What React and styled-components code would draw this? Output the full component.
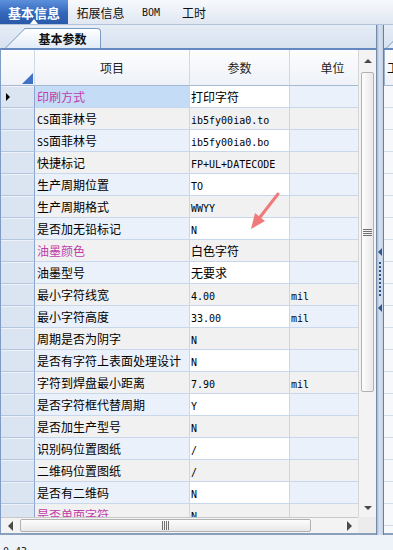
import React from 'react'
import styled, { createGlobalStyle } from 'styled-components'

const GlobalStyle = createGlobalStyle`
  html, body {
    margin: 0;
    padding: 0;
    overflow: hidden;
    background: #e9eff7;
  }
  body {
    font-family: "Noto Sans CJK SC", "Liberation Sans", sans-serif;
    font-size: 12px;
    color: #111;
  }
`

const rows = [
  { name: '印刷方式', value: '打印字符', pink: true },
  { name: 'CS面菲林号', value: 'ib5fy00ia0.to' },
  { name: 'SS面菲林号', value: 'ib5fy00ia0.bo' },
  { name: '快捷标记', value: 'FP+UL+DATECODE' },
  { name: '生产周期位置', value: 'TO' },
  { name: '生产周期格式', value: 'WWYY' },
  { name: '是否加无铅标记', value: 'N' },
  { name: '油墨颜色', value: '白色字符', pink: true },
  { name: '油墨型号', value: '无要求' },
  { name: '最小字符线宽', value: '4.00', unit: 'mil' },
  { name: '最小字符高度', value: '33.00', unit: 'mil' },
  { name: '周期是否为阴字', value: 'N' },
  { name: '是否有字符上表面处理设计', value: 'N' },
  { name: '字符到焊盘最小距离', value: '7.90', unit: 'mil' },
  { name: '是否字符框代替周期', value: 'Y' },
  { name: '是否加生产型号', value: 'N' },
  { name: '识别码位置图纸', value: '/' },
  { name: '二维码位置图纸', value: '/' },
  { name: '是否有二维码', value: 'N' },
  { name: '是否单面字符', value: 'N', pink: true },
]

const tabs = [
  { label: '基本信息', w: 68, active: true },
  { label: '拓展信息', w: 65 },
  { label: 'BOM', w: 36 },
  { label: '工时', w: 50 },
]

const tones = {
  sel: '#c5dcf6',
  blue: '#eaf1fb',
  gray: '#f1f1f1',
  white: '#ffffff',
}

// latin runs are drawn in a narrow mono face, like the old bitmap font
const Latin = styled.span`
  font-family: "DejaVu Sans Mono", "Liberation Mono", monospace;
  font-size: 10px;
`

const Txt = ({ children }) =>
  String(children)
    .split(/([\x00-\x7f]+)/)
    .filter(Boolean)
    .map((s, i) =>
      /^[\x00-\x7f]+$/.test(s) ? <Latin key={i}>{s}</Latin> : <span key={i}>{s}</span>
    )

const Screen = styled.div`
  position: relative;
  width: 393px;
  height: 550px;
  display: flex;
  flex-direction: column;
  background: #e9eff7;
  overflow: hidden;
`

const TopBar = styled.div`
  height: 25px;
  flex: none;
  display: flex;
  box-sizing: border-box;
  border-bottom: 1px solid #b3c3da;
  background: linear-gradient(#f7f9fc, #dfe7f2);
`

const MainTab = styled.div`
  position: relative;
  width: ${p => p.$w}px;
  display: flex;
  align-items: center;
  justify-content: center;
  font-size: ${p => (p.$active ? 13 : 12)}px;
  font-weight: ${p => (p.$active ? 700 : 400)};
  color: ${p => (p.$active ? '#fff' : '#111')};
  background: ${p => (p.$active ? 'linear-gradient(#5d90dc, #3367bb 55%, #2a59a8)' : 'transparent')};
  ${p => p.$active && `
    &::after {
      content: '';
      position: absolute;
      left: 50%;
      bottom: 0;
      margin-left: -4px;
      border-left: 4px solid transparent;
      border-right: 4px solid transparent;
      border-bottom: 5px solid #fff;
    }
  `}
`

const Body = styled.div`
  height: 510px;
  flex: none;
  display: flex;
`

const LeftPanel = styled.div`
  width: 376px;
  flex: none;
  display: flex;
  flex-direction: column;
`

const SubStrip = styled.div`
  position: relative;
  z-index: 0;
  height: 23px;
  flex: none;
  display: flex;
  align-items: flex-end;
  padding-left: ${p => p.$indent}px;
  box-sizing: border-box;
  background: linear-gradient(#e5edf7, #d8e2ef);
  overflow: hidden;
`

const SubTab = styled.div`
  position: relative;
  width: ${p => p.$w}px;
  height: 19px;
  border-top: 1px solid #7b9bc6;
  border-right: 1px solid #7b9bc6;
  border-radius: 0 4px 0 0;
  background: linear-gradient(#ffffff, #e2ebf8);
  font-size: 12px;
  font-weight: 700;
  line-height: 19px;
  text-align: center;
  &::before {
    content: '';
    position: absolute;
    top: -1px;
    bottom: 0;
    left: -20px;
    width: 22px;
    border-left: 1px solid #7b9bc6;
    border-top: 1px solid #7b9bc6;
    background: linear-gradient(#ffffff, #e2ebf8);
    transform: skewX(-45deg);
    transform-origin: bottom left;
    z-index: -1;
  }
`

const Frame = styled.div`
  flex: 1;
  min-height: 0;
  display: flex;
  flex-direction: column;
  border-top: 2px solid #6488bf;
  border-bottom: 2px solid #8a9fbd;
  border-left: 1px solid #7f9cc6;
`

const GridArea = styled.div`
  flex: 1;
  min-height: 0;
  display: flex;
`

const Viewport = styled.div`
  flex: 1;
  overflow: hidden;
  background: #fff;
`

const GridRow = styled.div`
  display: grid;
  grid-template-columns: 34px 155px 100px 86px;
  width: 375px;
`

const HeadCell = styled.div`
  position: relative;
  height: 36px;
  box-sizing: border-box;
  display: flex;
  align-items: center;
  justify-content: center;
  border-right: 1px solid #cfd8e6;
  border-bottom: 1px solid #a7b8d2;
  background: linear-gradient(#fdfdfe, #eef2f8);
  color: #222;
`

const CornerMark = styled.span`
  position: absolute;
  right: 1px;
  bottom: 1px;
  width: 0;
  height: 0;
  border-left: 11px solid transparent;
  border-bottom: 11px solid #3f72c6;
`

const RowHead = styled.div`
  height: 22px;
  box-sizing: border-box;
  display: flex;
  align-items: center;
  padding-left: 5px;
  background: #dbe4f1;
  border-bottom: 1px solid #b4c6df;
  border-right: 1px solid #8aa6cf;
  box-shadow: inset 0 1px 0 #f0f4fa;
`

const Marker = styled.span`
  width: 0;
  height: 0;
  border-top: 4px solid transparent;
  border-bottom: 4px solid transparent;
  border-left: 4px solid #000;
`

const Cell = styled.div`
  height: 22px;
  box-sizing: border-box;
  padding-left: ${p => p.$pad}px;
  line-height: 21px;
  white-space: nowrap;
  overflow: hidden;
  background: ${p => tones[p.$tone]};
  border-right: 1px solid #c9d7ec;
  border-bottom: 1px solid #c9d7ec;
  color: ${p => (p.$pink ? '#c13cab' : '#000')};
`

const VScroll = styled.div`
  width: 18px;
  flex: none;
  display: flex;
  flex-direction: column;
  box-sizing: border-box;
  background: #f3f3f3;
  border-left: 1px solid #d6d6d6;
`

const HScrollRow = styled.div`
  height: 16px;
  flex: none;
  display: flex;
`

const HScroll = styled.div`
  flex: 1;
  display: flex;
  align-items: stretch;
  box-sizing: border-box;
  background: #f3f3f3;
  border-top: 1px solid #c9c9c9;
`

const ScrollCorner = styled.div`
  width: 18px;
  background: #ececec;
`

const ScrollButton = styled.div`
  flex: none;
  ${p => (p.$vertical ? `height: ${p.$size}px;` : `width: ${p.$size}px;`)}
  display: flex;
  align-items: center;
  justify-content: center;
`

const Arrow = styled.span`
  width: 0;
  height: 0;
  ${p => p.$dir === 'up' && 'border-left: 4px solid transparent; border-right: 4px solid transparent; border-bottom: 4px solid #4a4a4a;'}
  ${p => p.$dir === 'down' && 'border-left: 4px solid transparent; border-right: 4px solid transparent; border-top: 4px solid #4a4a4a;'}
  ${p => p.$dir === 'left' && 'border-top: 5px solid transparent; border-bottom: 5px solid transparent; border-right: 5px solid #4a4a4a;'}
  ${p => p.$dir === 'right' && 'border-top: 5px solid transparent; border-bottom: 5px solid transparent; border-left: 5px solid #4a4a4a;'}
`

const Thumb = styled.div`
  flex: none;
  box-sizing: border-box;
  display: flex;
  align-items: center;
  justify-content: center;
  border: 1px solid #b1b1b1;
  border-radius: 2px;
  ${p =>
    p.$vertical
      ? `height: ${p.$size}px; margin: 0 2px; background: linear-gradient(90deg, #fdfdfd, #e8e8e8);`
      : `width: ${p.$size}px; margin: 1px 0; background: linear-gradient(#fdfdfd, #e8e8e8);`}
`

const Grip = styled.span`
  ${p =>
    p.$vertical
      ? 'width: 9px; height: 7px; background: repeating-linear-gradient(#707070 0 1px, transparent 1px 2px);'
      : 'width: 7px; height: 9px; background: repeating-linear-gradient(90deg, #707070 0 1px, transparent 1px 2px);'}
`

const Spacer = styled.div`
  flex: 1;
`

const Splitter = styled.div`
  width: 8px;
  flex: none;
  display: flex;
  flex-direction: column;
  align-items: center;
  justify-content: center;
  gap: 6px;
  box-sizing: border-box;
  border-left: 1px solid #7589a8;
  border-right: 1px solid #6c7f9c;
  background: linear-gradient(90deg, #a9bad3, #d9e4f2 45%, #c3d1e5);
`

const SplitArrow = styled.span`
  width: 0;
  height: 0;
  border-top: 4px solid transparent;
  border-bottom: 4px solid transparent;
  border-right: 4px solid #34558a;
`

const SplitDots = styled.span`
  width: 2px;
  height: 36px;
  background: repeating-linear-gradient(#2f4f80 0 2px, transparent 2px 4px);
`

const RightPanel = styled.div`
  flex: 1;
  min-width: 0;
  display: flex;
  flex-direction: column;
  overflow: hidden;
`

const MiniFrame = styled.div`
  flex: 1;
  display: flex;
  flex-direction: column;
  border-top: 2px solid #6488bf;
  border-bottom: 2px solid #8a9fbd;
`

const MiniHead = styled.div`
  height: 36px;
  flex: none;
  box-sizing: border-box;
  display: flex;
  align-items: center;
  padding-left: 2px;
  border-bottom: 1px solid #a7b8d2;
  border-left: 1px solid #9fb2ce;
  background: linear-gradient(#fdfdfe, #eef2f8);
  white-space: nowrap;
`

const MiniRows = styled.div`
  flex: 1;
  background: repeating-linear-gradient(#f6f8fb 0 21px, #d3dceb 21px 22px);
`

const StatusBar = styled.div`
  flex: 1;
  padding: 8px 0 0 3px;
  line-height: 14px;
  background: #eef3f9;
  color: #222;
`

const Annotation = styled.svg`
  position: absolute;
  left: 0;
  top: 0;
  pointer-events: none;
`

function toneFor(i, col) {
  if (i % 2 === 1) return 'gray'
  if (col === 'name') return i === 0 ? 'sel' : 'blue'
  if (col === 'value') return 'white'
  return 'blue'
}

export default function App() {
  return (
    <Screen>
      <GlobalStyle />
      <TopBar>
        {tabs.map(t => (
          <MainTab key={t.label} $w={t.w} $active={t.active}>
            <Txt>{t.label}</Txt>
          </MainTab>
        ))}
      </TopBar>

      <Body>
        <LeftPanel>
          <SubStrip $indent={25}>
            <SubTab $w={75}>基本参数</SubTab>
          </SubStrip>
          <Frame>
            <GridArea>
              <Viewport>
                <GridRow>
                  <HeadCell>
                    <CornerMark />
                  </HeadCell>
                  <HeadCell>项目</HeadCell>
                  <HeadCell>参数</HeadCell>
                  <HeadCell>单位</HeadCell>
                </GridRow>
                {rows.map((r, i) => (
                  <GridRow key={r.name}>
                    <RowHead>{i === 0 && <Marker />}</RowHead>
                    <Cell $pad={2} $tone={toneFor(i, 'name')} $pink={r.pink}>
                      <Txt>{r.name}</Txt>
                    </Cell>
                    <Cell $pad={1} $tone={toneFor(i, 'value')}>
                      <Txt>{r.value}</Txt>
                    </Cell>
                    <Cell $pad={1} $tone={toneFor(i, 'unit')}>
                      {r.unit && <Txt>{r.unit}</Txt>}
                    </Cell>
                  </GridRow>
                ))}
              </Viewport>
              <VScroll>
                <ScrollButton $vertical $size={22}>
                  <Arrow $dir="up" />
                </ScrollButton>
                <Thumb $vertical $size={320}>
                  <Grip $vertical />
                </Thumb>
                <Spacer />
                <ScrollButton $vertical $size={18}>
                  <Arrow $dir="down" />
                </ScrollButton>
              </VScroll>
            </GridArea>
            <HScrollRow>
              <HScroll>
                <ScrollButton $size={19}>
                  <Arrow $dir="left" />
                </ScrollButton>
                <Thumb $size={291}>
                  <Grip />
                </Thumb>
                <Spacer />
                <ScrollButton $size={18}>
                  <Arrow $dir="right" />
                </ScrollButton>
              </HScroll>
              <ScrollCorner />
            </HScrollRow>
          </Frame>
        </LeftPanel>

        <Splitter>
          <SplitArrow />
          <SplitDots />
          <SplitArrow />
        </Splitter>

        <RightPanel>
          <SubStrip $indent={22}>
            <SubTab $w={60} />
          </SubStrip>
          <MiniFrame>
            <MiniHead>工时</MiniHead>
            <MiniRows />
          </MiniFrame>
        </RightPanel>
      </Body>

      <StatusBar>
        <Txt>0.43</Txt>
      </StatusBar>

      <Annotation width="393" height="550">
        <line x1="278" y1="194" x2="257" y2="221" stroke="#f07a7a" strokeWidth="3" strokeLinecap="round" />
        <polygon points="251,229 265,221 255,213" fill="#f07a7a" />
      </Annotation>
    </Screen>
  )
}
